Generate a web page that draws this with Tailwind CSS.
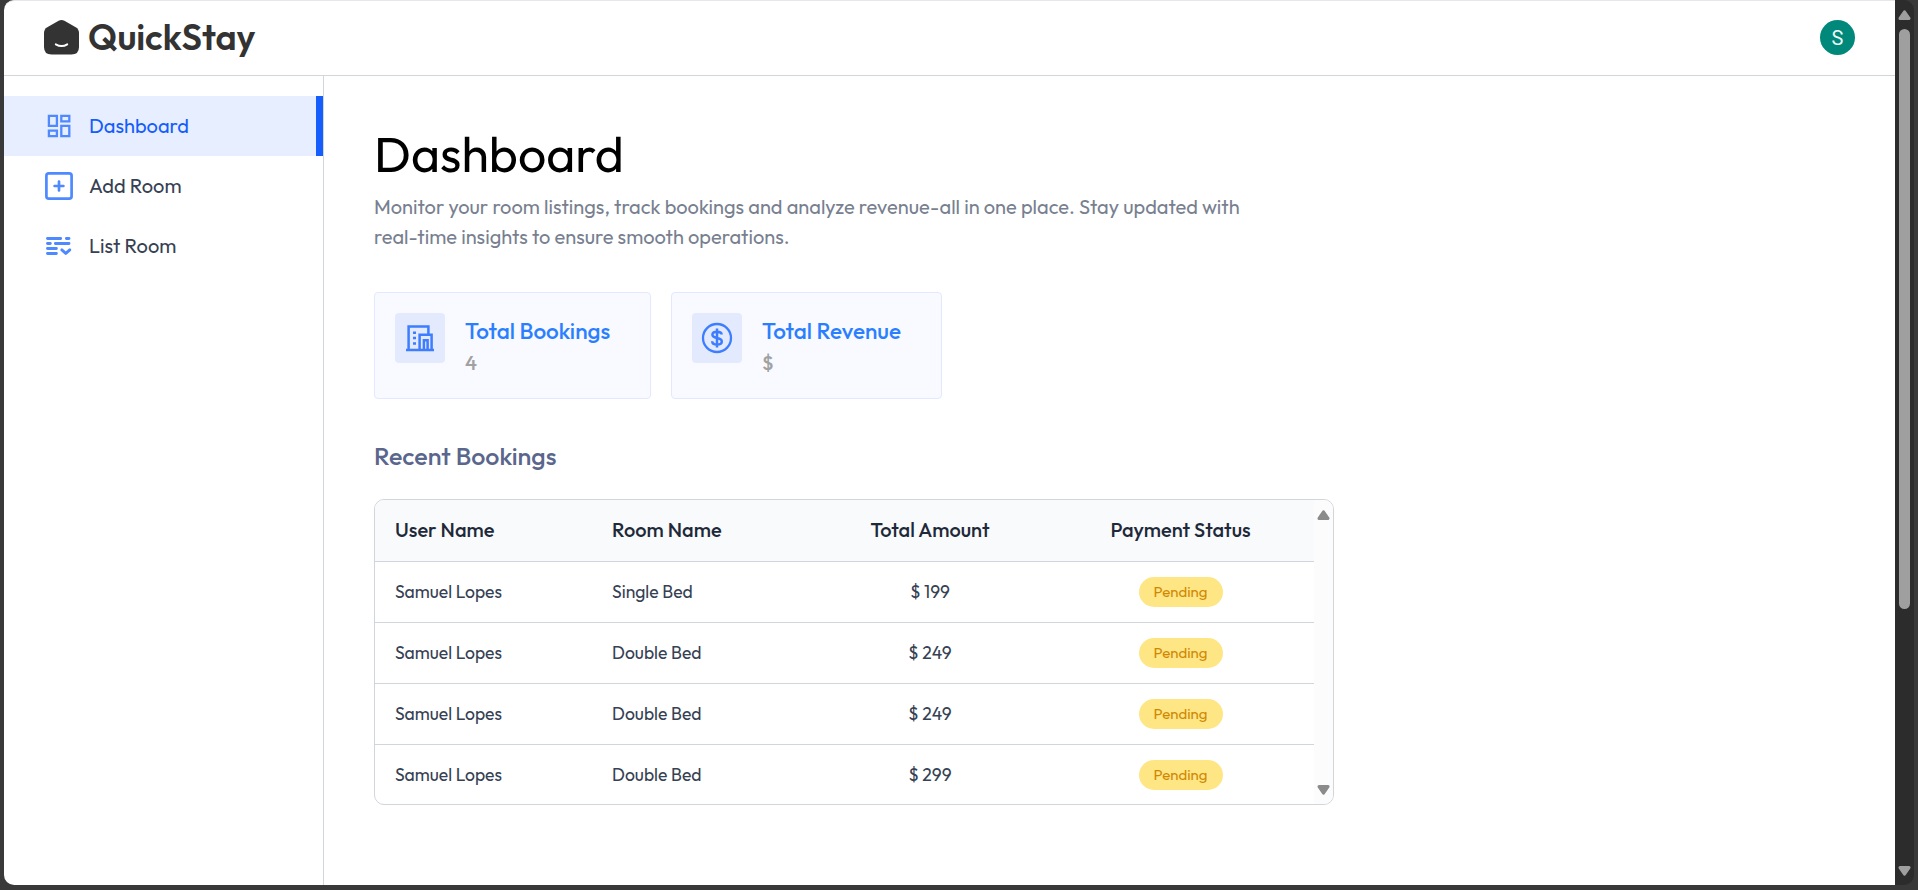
<!DOCTYPE html>
<html lang="en">
<head>
<meta charset="utf-8">
<title>QuickStay</title>
<script src="https://cdn.jsdelivr.net/npm/@tailwindcss/browser@4"></script>
</head>
<body class="h-[890px] overflow-hidden bg-[#393939] font-['Outfit','Lato',sans-serif]">
<div class="flex h-[885px] pl-1 pr-1">
  <div class="flex w-[1891px] flex-col overflow-hidden rounded-l-[10px] border-t border-gray-200 bg-white">
    <header class="flex h-[75px] shrink-0 items-center justify-between border-b border-gray-300 pb-px pl-10 pr-10">
      <div class="flex items-center gap-[9px] text-[#333333]">
        <svg class="size-[35px]" viewBox="0 0 35 35" fill="none">
          <path d="M14.6.8Q17.5-.7 20.4.8L31.7 7.2Q35 9.2 35 13V27Q35 34.6 27.4 34.6H7.6Q0 34.6 0 27V13Q0 9.2 3.3 7.2Z" fill="currentColor"/>
          <path d="M11.8 24.3Q17.7 27.7 23.2 24.3" stroke="#fff" stroke-width="2" stroke-linecap="round"/>
        </svg>
        <span class="pb-px text-[36px] leading-[44px] font-semibold tracking-[-0.12px]">QuickStay</span>
      </div>
      <div class="flex size-[35px] items-center justify-center rounded-full bg-[#00897b] font-['Roboto',sans-serif] text-[20px] leading-none text-white/95">S</div>
    </header>
    <div class="flex flex-1">
      <nav class="w-80 shrink-0 border-r border-gray-300 pt-5 text-[20px] leading-[30px] text-gray-700">
        <div class="flex h-[60px] items-center gap-[15px] border-r-[7px] border-blue-600 bg-[#e7eeff] pl-10 text-blue-600">
          <svg class="size-[30px]" viewBox="0 0 30 30" fill="none" stroke="#4f89ff" stroke-width="2.3">
            <path d="M4.9 4.9H12.9V14.9H4.9ZM17.3 4.9H25.3V10.3H17.3ZM4.9 19.7H12.9V25.1H4.9ZM17.3 14.9H25.3V25.1H17.3Z"/>
          </svg>
          <span>Dashboard</span>
        </div>
        <div class="flex h-[60px] items-center gap-[15px] pl-10">
          <svg class="size-[30px]" viewBox="0 0 30 30" fill="none" stroke="#4f89ff" stroke-width="2.7" stroke-linecap="round">
            <rect x="2.4" y="2.4" width="25.2" height="25.2" rx="2.4"/>
            <path d="M15 10.6V19.4M10.6 15H19.4"/>
          </svg>
          <span>Add Room</span>
        </div>
        <div class="flex h-[60px] items-center gap-[15px] pl-10">
          <svg class="size-[30px]" viewBox="0 0 30 30" fill="none" stroke="#4f89ff" stroke-width="2.9" stroke-linecap="round" stroke-linejoin="round">
            <path d="M3.5 7.5H16.7M22.4 7.5H25M3.5 12.5H6.3M11.4 12.5H25M3.5 17.5H12.4M3.5 22.5H12.4M17.8 18.9L21.8 22.4L25.8 18.9"/>
          </svg>
          <span>List Room</span>
        </div>
      </nav>
      <main class="flex-1 pt-10 pl-[50px]">
        <h1 class="text-[50px] leading-[75px] text-black">Dashboard</h1>
        <p class="mt-px w-[872px] text-[20px] leading-[30px] text-[#788090]">Monitor your room listings, track bookings and analyze revenue-all in one place. Stay updated with real-time insights to ensure smooth operations.</p>
        <div class="mt-10 flex gap-5">
          <div class="flex h-[107px] w-[277px] rounded border border-[#e2e9fe] bg-[#f9faff] p-5">
            <svg class="size-[50px] shrink-0" viewBox="0 0 50 50" fill="none" stroke="#3d7dff" stroke-width="2.5">
              <rect width="50" height="50" rx="4" fill="#e3eafd" stroke="none"/>
              <path d="M11 37H39M13.6 37V13.4H33.4V21.5M24.6 37V21.7H36.6V37M28.9 37V27.2H32.6V37"/>
              <path d="M18 19.7H21M18 25H21M18 30.6H21"/>
            </svg>
            <div class="ml-5 font-medium">
              <p class="text-[22.5px] leading-[35px] whitespace-nowrap text-blue-500">Total Bookings</p>
              <p class="text-[20px] leading-[30px] text-neutral-400">4</p>
            </div>
          </div>
          <div class="flex h-[107px] w-[271px] rounded border border-[#e2e9fe] bg-[#f9faff] p-5">
            <svg class="size-[50px] shrink-0" viewBox="0 0 50 50" fill="none" stroke="#3d7dff" stroke-width="2.3">
              <rect width="50" height="50" rx="4" fill="#e3eafd" stroke="none"/>
              <circle cx="25" cy="25" r="14"/>
              <path d="M25 15.6V34.6M29.6 21.6C29.6 19.6 27.7 18.7 25 18.7S20.4 19.7 20.4 21.8C20.4 26.2 29.8 23.8 29.8 28.4C29.8 30.5 27.8 31.5 25 31.5S20.2 30.5 20.2 28.2" stroke-width="2.5"/>
            </svg>
            <div class="ml-5 font-medium">
              <p class="text-[22.5px] leading-[35px] whitespace-nowrap text-blue-500">Total Revenue</p>
              <p class="text-[20px] leading-[30px] text-neutral-400">$</p>
            </div>
          </div>
        </div>
        <h2 class="mt-10 text-[25px] leading-[35px] font-medium text-[#5a668c]">Recent Bookings</h2>
        <div class="mt-[25px] flex h-[306px] w-[960px] overflow-hidden rounded-[10px] border border-gray-300">
          <table class="h-[305px] w-[939px] table-fixed border-collapse text-[17.5px] leading-[25px] text-gray-700">
            <colgroup><col class="w-[217px]"><col class="w-[220px]"><col class="w-[236px]"><col class="w-[266px]"></colgroup>
            <thead class="bg-[#f9fafc] text-[20px] leading-[30px] text-gray-800">
              <tr class="h-[61px] border-b border-gray-300">
                <th class="px-5 text-left font-medium">User Name</th>
                <th class="px-5 text-left font-medium">Room Name</th>
                <th class="text-center font-medium">Total Amount</th>
                <th class="pr-px text-center font-medium">Payment Status</th>
              </tr>
            </thead>
            <tbody>
              <tr class="h-[61px] border-b border-gray-300">
                <td class="px-5">Samuel Lopes</td><td class="px-5">Single Bed</td><td class="text-center">$ 199</td>
                <td class="pr-px"><div class="mx-auto h-[30px] w-[84px] rounded-full bg-amber-200 text-center text-[15px] leading-[30px] text-yellow-600">Pending</div></td>
              </tr>
              <tr class="h-[61px] border-b border-gray-300">
                <td class="px-5">Samuel Lopes</td><td class="px-5">Double Bed</td><td class="text-center">$ 249</td>
                <td class="pr-px"><div class="mx-auto h-[30px] w-[84px] rounded-full bg-amber-200 text-center text-[15px] leading-[30px] text-yellow-600">Pending</div></td>
              </tr>
              <tr class="h-[61px] border-b border-gray-300">
                <td class="px-5">Samuel Lopes</td><td class="px-5">Double Bed</td><td class="text-center">$ 249</td>
                <td class="pr-px"><div class="mx-auto h-[30px] w-[84px] rounded-full bg-amber-200 text-center text-[15px] leading-[30px] text-yellow-600">Pending</div></td>
              </tr>
              <tr class="h-[61px]">
                <td class="px-5">Samuel Lopes</td><td class="px-5">Double Bed</td><td class="text-center">$ 299</td>
                <td class="pr-px"><div class="mx-auto h-[30px] w-[84px] rounded-full bg-amber-200 text-center text-[15px] leading-[30px] text-yellow-600">Pending</div></td>
              </tr>
            </tbody>
          </table>
          <div class="flex flex-1 flex-col items-center justify-between bg-[#fcfcfc] pt-[10px] pb-[9px] text-[#8b8b8b]">
            <svg class="h-[10px] w-[13px]" viewBox="0 0 13 10" fill="currentColor" stroke="currentColor" stroke-width="3" stroke-linejoin="round"><path d="M6.5 1.8L11 8.4H2Z"/></svg>
            <svg class="h-[10px] w-[13px]" viewBox="0 0 13 10" fill="currentColor" stroke="currentColor" stroke-width="3" stroke-linejoin="round"><path d="M6.5 8.2L11 1.6H2Z"/></svg>
          </div>
        </div>
      </main>
    </div>
  </div>
  <div class="flex w-[19px] flex-col items-center rounded-r-[10px] bg-[#2c2c2c] pt-[10px] pb-[9px] text-[#9f9f9f]">
    <svg class="h-[10px] w-[13px]" viewBox="0 0 13 10" fill="currentColor" stroke="currentColor" stroke-width="3" stroke-linejoin="round"><path d="M6.5 1.8L11 8.4H2Z"/></svg>
    <div class="mt-[9px] h-[580px] w-[11px] rounded-full bg-[#9f9f9f]"></div>
    <svg class="mt-auto h-[10px] w-[13px]" viewBox="0 0 13 10" fill="currentColor" stroke="currentColor" stroke-width="3" stroke-linejoin="round"><path d="M6.5 8.2L11 1.6H2Z"/></svg>
  </div>
</div>
</body>
</html>
